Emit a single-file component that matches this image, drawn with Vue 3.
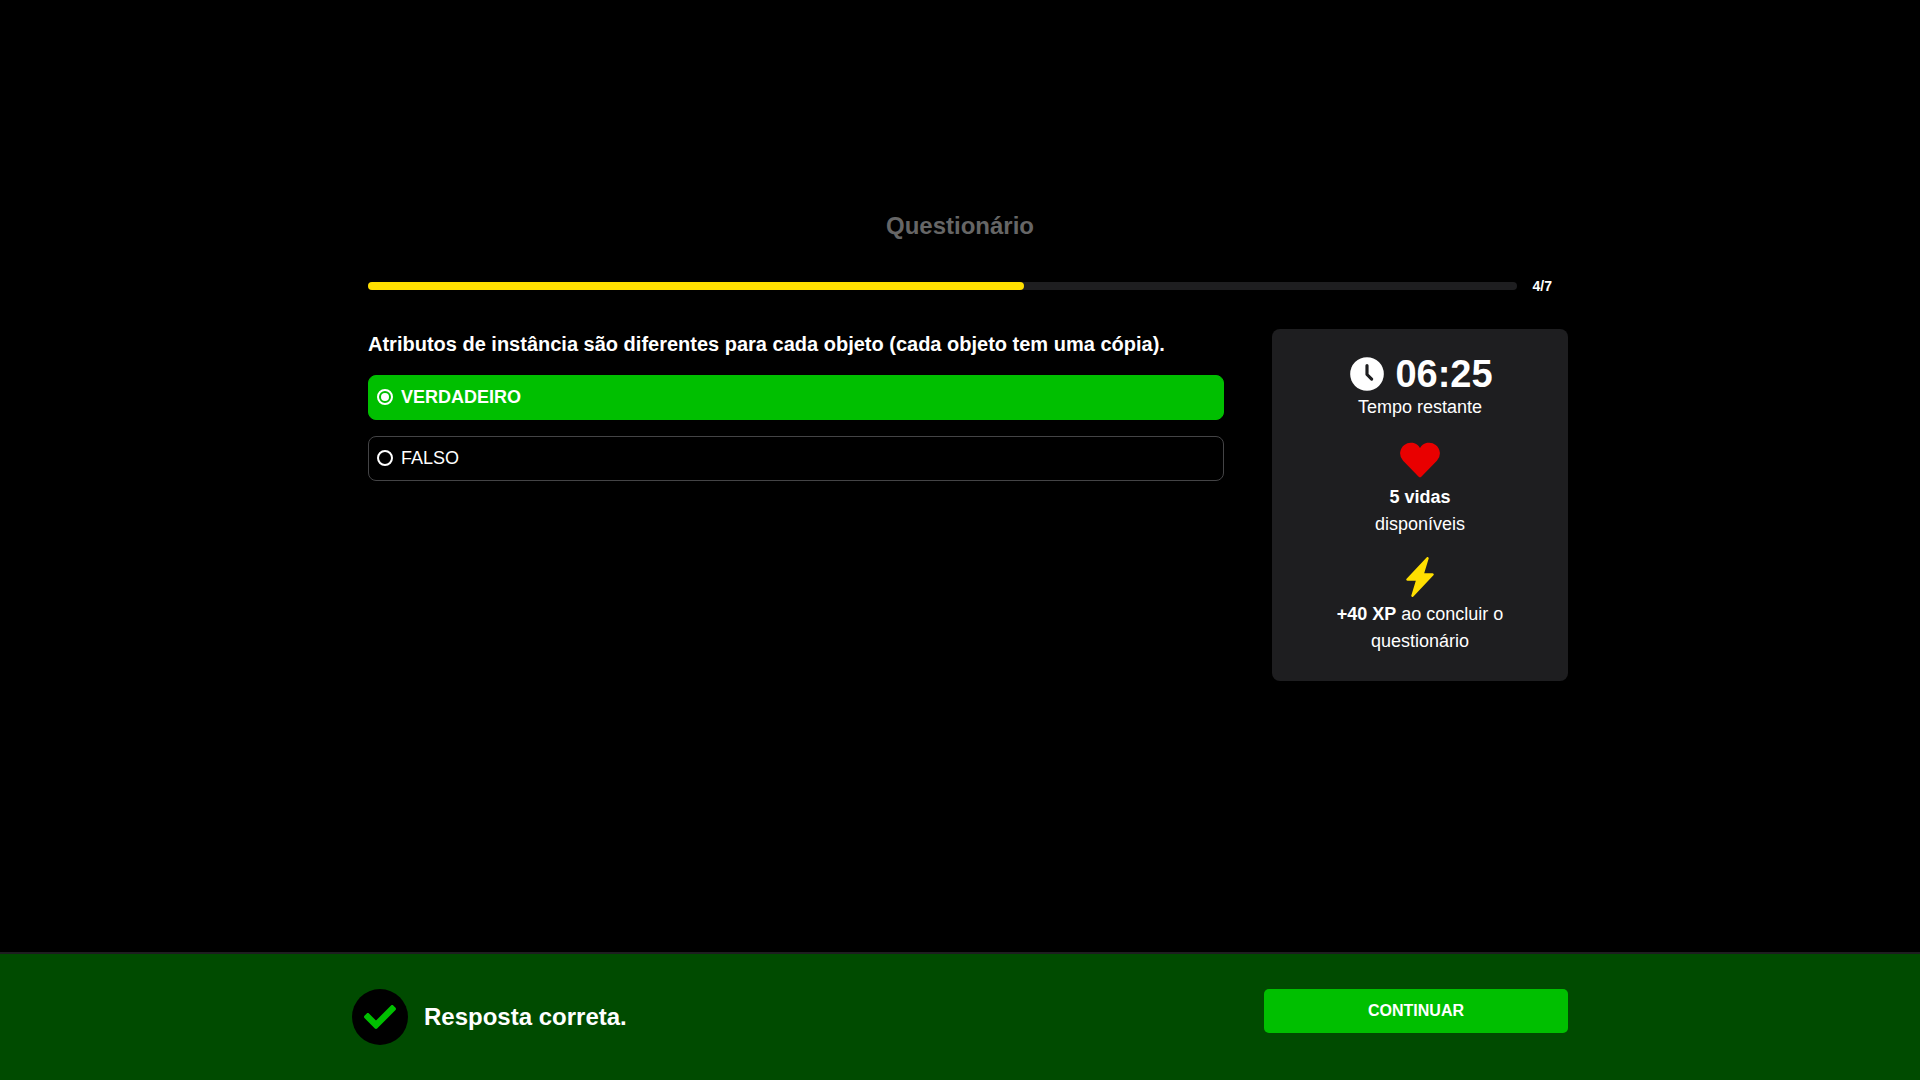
<script setup>
const current = 4
const total = 7
const options = [
  { label: 'VERDADEIRO', selected: true },
  { label: 'FALSO', selected: false },
]
</script>

<template>
  <div class="page">
    <main class="content">
      <h1 class="title">Questionário</h1>
      <div class="progress">
        <div class="track">
          <div class="fill" :style="{ width: (current / total) * 100 + '%' }"></div>
        </div>
        <span class="counter">{{ current }}/{{ total }}</span>
      </div>
      <div class="columns">
        <section class="question">
          <h2>Atributos de instância são diferentes para cada objeto (cada objeto tem uma cópia).</h2>
          <div v-for="o in options" :key="o.label" class="option" :class="{ selected: o.selected }">
            <svg class="radio" width="16" height="16" viewBox="0 0 16 16">
              <circle cx="8" cy="8" r="7" fill="none" stroke="#fff" stroke-width="2" />
              <circle v-if="o.selected" cx="8" cy="8" r="4" fill="#fff" />
            </svg>
            <span>{{ o.label }}</span>
          </div>
        </section>
        <aside class="card">
          <div class="time">
            <svg width="40" height="40" viewBox="0 0 24 24">
              <circle cx="12" cy="12" r="10.1" fill="#fff" />
              <path d="M12 6.9v5.4l2.8 2.8" fill="none" stroke="#1e1e20" stroke-width="1.9" stroke-linecap="round" stroke-linejoin="round" />
            </svg>
            <strong>06:25</strong>
          </div>
          <p>Tempo restante</p>
          <svg class="icon" width="40" height="40" viewBox="0 0 40 40">
            <path d="M20 7.9A10.7 10.7 0 1 0 3.1 20.8L18.7 36.7Q20 38 21.3 36.7L36.9 20.8A10.7 10.7 0 1 0 20 7.9Z" fill="#e90000" />
          </svg>
          <p><strong>5 vidas</strong><br />disponíveis</p>
          <svg class="icon" width="40" height="40" viewBox="0 0 16 16">
            <path fill="#ffdf00" d="M11.251.068a.5.5 0 0 1 .227.58L9.677 6.5H13a.5.5 0 0 1 .364.843l-8 8.5a.5.5 0 0 1-.842-.49L6.323 9.5H3a.5.5 0 0 1-.364-.843l8-8.5a.5.5 0 0 1 .615-.09z" />
          </svg>
          <p><strong>+40 XP</strong> ao concluir o<br />questionário</p>
        </aside>
      </div>
    </main>
    <footer class="footer">
      <div class="footer-inner">
        <div class="result">
          <svg width="56" height="56" viewBox="0 0 56 56">
            <circle cx="28" cy="28" r="28" fill="#000" />
            <path transform="translate(12 12) scale(.0625)" fill="#00bf00" d="M173.898 439.404l-166.4-166.4c-9.997-9.997-9.997-26.206 0-36.204l36.203-36.204c9.997-9.998 26.207-9.998 36.204 0L192 312.69 432.095 72.596c9.997-9.997 26.207-9.997 36.204 0l36.203 36.204c9.997 9.997 9.997 26.206 0 36.204l-294.4 294.401c-9.998 9.997-26.207 9.997-36.204-.001z" />
          </svg>
          <span>Resposta correta.</span>
        </div>
        <button type="button">CONTINUAR</button>
      </div>
    </footer>
  </div>
</template>

<style>
body {
  background: #000;
}
</style>

<style scoped>
.page {
  height: 1080px;
  display: flex;
  flex-direction: column;
  justify-content: space-between;
  overflow: hidden;
  background: #000;
  color: #fff;
  font-family: "Liberation Sans", Arial, sans-serif;
  font-size: 18px;
  line-height: 27px;
}
.content {
  width: 1216px;
  margin: 0 auto;
  padding-top: 208px;
}
.title {
  margin: 0;
  font-size: 24px;
  line-height: 36px;
  text-align: center;
  color: #666;
}
.progress {
  display: flex;
  align-items: center;
  gap: 16px;
  height: 20px;
  margin: 32px 16px 0;
}
.track {
  flex: 1;
  height: 8px;
  border-radius: 4px;
  background: #1e1e20;
}
.fill {
  height: 8px;
  border-radius: 4px;
  background: #ffdf00;
}
.counter {
  font-size: 14px;
  line-height: 20px;
  font-weight: bold;
}
.columns {
  display: flex;
  align-items: flex-start;
  justify-content: space-between;
  margin-top: 33px;
  padding-left: 16px;
}
.question {
  width: 856px;
}
h2 {
  margin: 0 0 16px;
  font-size: 20px;
  line-height: 30px;
}
.option {
  display: flex;
  align-items: center;
  gap: 8px;
  box-sizing: border-box;
  height: 45px;
  margin-bottom: 16px;
  padding: 0 8px;
  border: 1px solid #444446;
  border-radius: 8px;
}
.radio {
  margin-bottom: 1px;
}
.option.selected {
  border-color: #00bf00;
  background: #00bf00;
  font-weight: bold;
}
.card {
  box-sizing: border-box;
  width: 296px;
  height: 352px;
  padding-top: 25px;
  border-radius: 8px;
  background: #1e1e20;
  text-align: center;
}
.time {
  display: flex;
  justify-content: center;
  gap: 8px;
  height: 40px;
  font-size: 38px;
  line-height: 40px;
}
.card p {
  margin: 0;
}
.icon {
  display: block;
  margin: 19px auto 4px;
}
.footer {
  box-sizing: border-box;
  height: 128px;
  padding-top: 35px;
  border-top: 2px solid #1e1e20;
  background: #004b00;
}
.footer-inner {
  display: flex;
  align-items: flex-start;
  justify-content: space-between;
  width: 1216px;
  margin: 0 auto;
}
.result {
  display: flex;
  align-items: center;
  gap: 16px;
  font-size: 24px;
  line-height: 36px;
  font-weight: bold;
}
button {
  width: 304px;
  height: 44px;
  padding: 0;
  border: 0;
  border-radius: 5px;
  background: #00bf00;
  color: #fff;
  font: bold 16px "Liberation Sans", Arial, sans-serif;
}
</style>
